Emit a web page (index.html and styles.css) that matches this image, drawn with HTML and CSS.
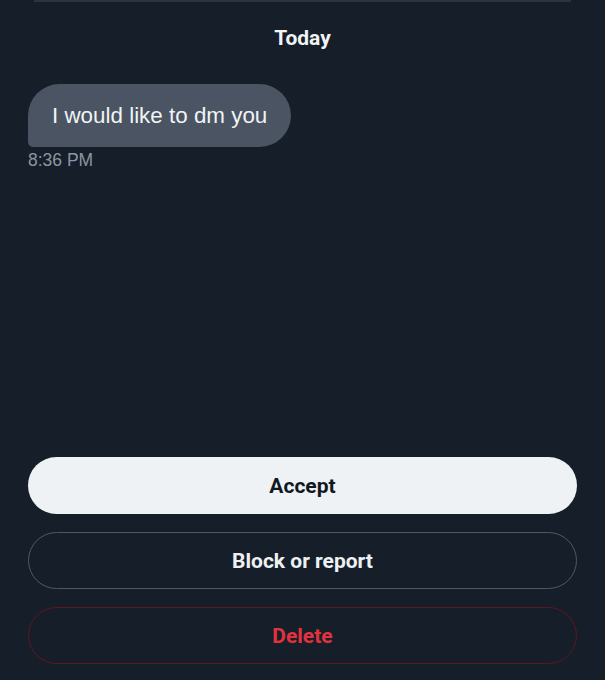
FILE: index.html
```html
<!DOCTYPE html>
<html lang="en">
<head>
<meta charset="UTF-8">
<meta name="viewport" content="width=device-width, initial-scale=1.0">
<title>Message request</title>
<link rel="stylesheet" href="styles.css">
</head>
<body>

<div class="screen">
    <div class="rule"></div>
    <div class="day">Today</div>

    <div class="message">
        <div class="bubble">I would like to dm you</div>
        <div class="time">8:36 PM</div>
    </div>

    <div class="actions">
        <button class="btn btn-accept">Accept</button>
        <button class="btn btn-block">Block or report</button>
        <button class="btn btn-delete">Delete</button>
    </div>
</div>

</body>
</html>
```

FILE: styles.css
```css
body {
    margin: 0;
    background-color: #161e29;
    font-family: "Liberation Sans", Arial, sans-serif;
    color: #e7e9ea;
}
.screen {
    height: 680px;
    box-sizing: border-box;
    padding: 0 28px 16px;
    display: flex;
    flex-direction: column;
}
.rule {
    height: 2px;
    margin: 0 6px;
    background-color: #2b333e;
}
.day {
    margin-top: 25px;
    text-align: center;
    font-family: Roboto, "Liberation Sans", sans-serif;
    font-weight: bold;
    font-size: 21px;
    line-height: 22px;
    color: #f1f3f4;
}
.message {
    margin-top: 35px;
    display: flex;
    flex-direction: column;
    align-items: flex-start;
}
.bubble {
    background-color: #4a5462;
    color: #f1f3f4;
    font-size: 22.4px;
    line-height: 25px;
    padding: 19px 24px 19px;
    border-radius: 32px 32px 32px 5px;
}
.time {
    margin-top: 4px;
    font-size: 17.5px;
    line-height: 18px;
    color: #8a96a3;
}
.actions {
    margin-top: auto;
    display: flex;
    flex-direction: column;
    gap: 18px;
}
.btn {
    display: block;
    width: 100%;
    height: 57px;
    border-radius: 29px;
    font-family: Roboto, "Liberation Sans", sans-serif;
    font-weight: bold;
    font-size: 21px;
    cursor: pointer;
    background: none;
}
.btn-accept {
    background-color: #eef2f4;
    border: none;
    color: #111821;
}
.btn-block {
    border: 1px solid #4e5966;
    color: #eef1f3;
}
.btn-delete {
    border: 1px solid #5e1620;
    color: #e0333d;
}
```
